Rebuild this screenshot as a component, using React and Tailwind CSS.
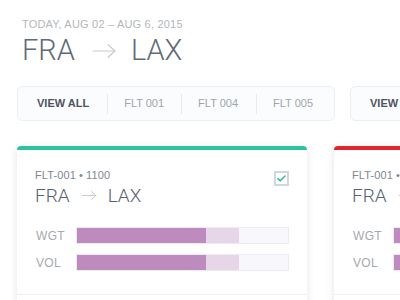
import React from "react";

function Arrow({ w, h, color, sw = 1.2 }) {
  return (
    <svg width={w} height={h} viewBox={`0 0 ${w} ${h}`} fill="none" stroke={color} strokeWidth={sw} strokeLinecap="round" strokeLinejoin="round">
      <line x1="1" y1={h / 2} x2={w - 1} y2={h / 2} />
      <polyline points={`${w - 1 - h / 2 + 1},1.5 ${w - 1},${h / 2} ${w - 1 - h / 2 + 1},${h - 1.5}`} />
    </svg>
  );
}

const tabPad = ["pl-[19px] pr-[18px]", "pl-[16px] pr-[17px]", "pl-[16px] pr-[18px]", "pl-[16px] pr-[21px]"];

function TabBar({ items }) {
  return (
    <div className="flex items-center h-[35px] shrink-0 rounded-[6px] border border-[#eceef1] bg-[#fbfcfd]">
      {items.map((it, i) => (
        <React.Fragment key={i}>
          {i > 0 && <div className="w-px h-[20px] bg-[#e8eaed]" />}
          <div
            className={
              "text-[11px] leading-none whitespace-nowrap " +
              tabPad[i] +
              (i === 0 ? " font-bold text-[#4d5363]" : " text-[#9fa4aa]")
            }
          >
            {it}
          </div>
        </React.Fragment>
      ))}
    </div>
  );
}

function Bar({ label, dark, light }) {
  return (
    <div className="flex items-center h-[17px]">
      <div className="w-[41px] pl-[1px] text-[12px] leading-none text-[#a6a9ae] tracking-[0.3px]">{label}</div>
      <div className="relative flex-1 h-[17px] bg-[#f8f7fb] border border-[#ecebf1] overflow-hidden">
        <div className="absolute left-0 top-0 bottom-0 bg-[#e6d6e7]" style={{ width: light + "%" }} />
        <div className="absolute left-0 top-0 bottom-0 bg-[#be8bbf]" style={{ width: dark + "%" }} />
      </div>
    </div>
  );
}

function Card({ color, checked }) {
  return (
    <div className="w-[290px] shrink-0 bg-white rounded-[4px] shadow-[0_2px_9px_rgba(0,0,0,0.11)] overflow-hidden">
      <div className="h-[4px]" style={{ background: color }} />
      <div className="px-[18px] pt-[20px]">
        <div className="flex justify-between items-start">
          <div>
            <div className="text-[11px] leading-none text-[#7f8791] tracking-[0.1px]">FLT-001 • 1100</div>
            <div className="flex items-center mt-[5px] text-[19px] leading-none text-[#59626f] font-['Roboto'] font-light">
              <span>FRA</span>
              <span className="ml-[11px] mr-[11px] flex items-center">
                <Arrow w={16} h={11} color="#c8ccd1" sw={1} />
              </span>
              <span>LAX</span>
            </div>
          </div>
          {checked && (
            <div className="w-[15px] h-[15px] mt-[1px] border-2 border-[#d3d6da] bg-white flex items-center justify-center">
              <svg width="9" height="7" viewBox="0 0 9 7" fill="none" stroke="#35bf9d" strokeWidth="1.6" strokeLinecap="round" strokeLinejoin="round">
                <polyline points="1,3.6 3.3,5.8 8,1" />
              </svg>
            </div>
          )}
        </div>
        <div className="mt-[22px] flex flex-col gap-[10px]">
          <Bar label="WGT" dark={61.3} light={77} />
          <Bar label="VOL" dark={61.3} light={77} />
        </div>
      </div>
      <div className="mt-[23px] border-t border-[#eeeff1] h-[40px]" />
    </div>
  );
}

export default function App() {
  return (
    <div className="w-[400px] h-[300px] overflow-hidden bg-white font-['Liberation_Sans',Arial,sans-serif]">
      <div className="pl-[22px] pt-[19px]">
        <div className="text-[11px] leading-none text-[#b3b7bb] tracking-[0.2px]">TODAY, AUG 02 – AUG 6, 2015</div>
        <div className="flex items-center mt-[6px] text-[29px] leading-none text-[#5f6b76] font-['Roboto'] font-light">
          <span>FRA</span>
          <span className="ml-[17px] mr-[15px] flex items-center">
            <Arrow w={24} h={16} color="#c6cbcf" sw={1.1} />
          </span>
          <span>LAX</span>
        </div>
      </div>
      <div className="flex gap-[15px] pl-[17px] mt-[21px]">
        <TabBar items={["VIEW ALL", "FLT 001", "FLT 004", "FLT 005"]} />
        <TabBar items={["VIEW ALL", "FLT 001", "FLT 004", "FLT 005"]} />
      </div>
      <div className="flex gap-[27px] pl-[17px] mt-[25px]">
        <Card color="#2dc3a0" checked />
        <Card color="#e1262b" />
      </div>
    </div>
  );
}
